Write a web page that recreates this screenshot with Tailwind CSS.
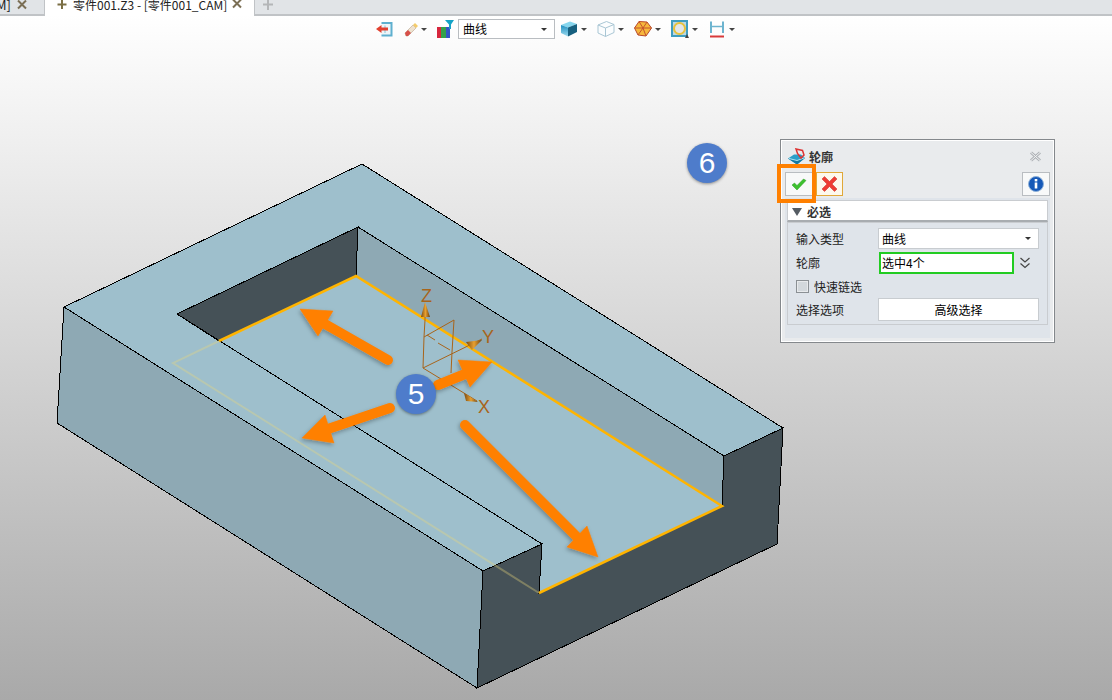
<!DOCTYPE html>
<html><head><meta charset="utf-8"><script src="https://cdn.jsdelivr.net/npm/@tailwindcss/browser@4"></script></head>
<body class="m-0">
<div class="relative w-[1112px] h-[700px] overflow-hidden bg-[linear-gradient(180deg,#ffffff_2%,#a9a9a9_100%)] font-['Noto_Sans_CJK_SC',sans-serif] text-black">

<!-- tab bar -->
<div class="relative z-10 flex items-start h-[16px] bg-[#e1e4e7] border-b-2 border-[#c0c3c6]">
  <div class="w-[45px] h-[15px] flex items-start border-r border-[#c0c3c6] overflow-hidden">
    <span class="ml-[-4px] mt-[-4px] text-[13px] leading-[18px] text-[#222]">M]</span>
    <svg class="ml-[6px]" width="10" height="10" viewBox="0 0 10 10"><path d="M1 0.5L9 8.5M9 0.5L1 8.5" stroke="#7b6f55" stroke-width="2"/></svg>
  </div>
  <div class="w-[209px] h-[16px] bg-white flex items-start overflow-hidden">
    <svg class="ml-[12px] shrink-0" width="10" height="10" viewBox="0 0 10 10"><path d="M5 0V9M0.5 4.5H9.5" stroke="#7b6f45" stroke-width="2"/></svg>
    <span class="ml-[6px] mt-[-4px] text-[12px] leading-[18px] whitespace-nowrap text-[#222] w-[153px]">零件001.Z3 - [零件001_CAM]</span>
    <svg class="ml-[6px] mt-[-1px] shrink-0" width="10" height="10" viewBox="0 0 10 10"><path d="M1 0.5L9 8.5M9 0.5L1 8.5" stroke="#7b6f55" stroke-width="2"/></svg>
  </div>
  <div class="w-px h-[15px] bg-[#c0c3c6]"></div>
  <svg class="ml-[8px] shrink-0" width="10" height="10" viewBox="0 0 10 10"><path d="M5 0V10M0 4.5H10" stroke="#b4b6b8" stroke-width="2"/></svg>
</div>

<!-- toolbar -->
<div class="relative z-10 flex items-center h-[20px] mt-[3px] pl-[376px]">
  <svg class="shrink-0" width="17" height="16" viewBox="0 0 17 16"><path d="M5.5 2H15.5V14.5H5.5" fill="#eef5f8" stroke="#5fb0cf" stroke-width="2"/><path d="M9 4.5V12" stroke="#a9d3e2" stroke-width="1.5"/><path d="M0 8L5.5 4V6.5H12V9.5H5.5V12Z" fill="#e2402f"/></svg>
  <svg class="ml-[11px] shrink-0" width="15" height="15" viewBox="0 0 15 15"><path d="M1 11L9 3L12 6L4 14H2Z" fill="#efe2cf" stroke="#b9a58f" stroke-width=".6"/><path d="M1 11L4 8L7 11L4 14H2Z" fill="#d8504a"/><path d="M9 3L11 1L14 4L12 6Z" fill="#f4cb6a"/></svg>
  <span class="ml-[2px] w-0 h-0 border-x-[3px] border-x-transparent border-t-[3px] border-t-[#444]"></span>
  <svg class="ml-[9px] shrink-0" width="18" height="18" viewBox="0 0 18 18"><rect x="1" y="7" width="4" height="11" fill="#d7263d"/><rect x="5" y="7" width="5" height="11" fill="#35a04a"/><rect x="10" y="7" width="4" height="11" fill="#3554c4"/><path d="M9 0H18L15 4.5V9H13V4.5Z" fill="#15a3c7"/></svg>
  <div class="ml-[4px] w-[97px] h-[20px] bg-white border border-[#b9bdc1] flex items-center pl-[4px] pr-[7px] shrink-0">
    <span class="flex-1 text-[12px] leading-[16px]">曲线</span>
    <span class="w-0 h-0 border-x-[3px] border-x-transparent border-t-[3px] border-t-[#333]"></span>
  </div>
  <svg class="ml-[5px] shrink-0" width="18" height="16" viewBox="0 0 18 16"><defs><linearGradient id="cb" x1="0" y1="0" x2="0" y2="1"><stop offset="0" stop-color="#1e8fc0"/><stop offset="1" stop-color="#9fdcf0"/></linearGradient></defs><path d="M1 4L10 0.5L17 3L8 6.5Z" fill="#86d6ee"/><path d="M1 4L8 6.5V15.5L1 12Z" fill="url(#cb)"/><path d="M8 6.5L17 3V11L8 15.5Z" fill="#17607f"/></svg>
  <span class="ml-[3px] w-0 h-0 border-x-[3px] border-x-transparent border-t-[3px] border-t-[#444]"></span>
  <svg class="ml-[10px] shrink-0" width="18" height="16" viewBox="0 0 18 16"><path d="M1 4L9.5 0.5L17 3.5V11.5L8.5 15.5L1 12Z M1 4L8.5 7L17 3.5 M8.5 7V15.5" fill="#fbfdfe" stroke="#a9c6d4" stroke-width="1"/></svg>
  <span class="ml-[3px] w-0 h-0 border-x-[3px] border-x-transparent border-t-[3px] border-t-[#444]"></span>
  <svg class="ml-[10px] shrink-0" width="18" height="16" viewBox="0 0 18 16"><path d="M5 0.5L13 1L17.5 7L12 15L4 14L0.5 7Z" fill="#f6b73c" stroke="#b8482b" stroke-width="1"/><path d="M5 0.5L9 7L13 1M0.5 7L9 7L17.5 7M9 7L4 14M9 7L12 15" fill="none" stroke="#c4522e" stroke-width="1"/></svg>
  <span class="ml-[3px] w-0 h-0 border-x-[3px] border-x-transparent border-t-[3px] border-t-[#444]"></span>
  <svg class="ml-[10px] shrink-0" width="18" height="18" viewBox="0 0 18 18"><rect x="1" y="1" width="15" height="15" fill="#bcd8e4" stroke="#3f9dc0" stroke-width="2"/><circle cx="8.5" cy="8.5" r="5.5" fill="#e3e6e8" stroke="#e7c23c" stroke-width="2"/><path d="M16 14L18 18H14Z" fill="#444"/></svg>
  <span class="ml-[3px] w-0 h-0 border-x-[3px] border-x-transparent border-t-[3px] border-t-[#444]"></span>
  <svg class="ml-[12px] shrink-0" width="15" height="17" viewBox="0 0 15 17"><path d="M1 0.5V12M13 0.5V12" stroke="#6db4cf" stroke-width="2"/><path d="M2 5.5H12" stroke="#6db4cf" stroke-width="1.5"/><path d="M0 15.5H14" stroke="#d83a3a" stroke-width="2"/></svg>
  <span class="ml-[4px] w-0 h-0 border-x-[3px] border-x-transparent border-t-[3px] border-t-[#444]"></span>
</div>

<!-- 3D model (free canvas) -->
<svg class="absolute left-0 top-0" width="1112" height="700" viewBox="0 0 1112 700">
  <defs>
    <filter id="sh" x="-30%" y="-30%" width="160%" height="160%"><feDropShadow dx="-1" dy="2" stdDeviation="2" flood-color="#000" flood-opacity=".3"/></filter>
    <linearGradient id="cone" x1="0" y1="0" x2="1" y2="0"><stop offset="0" stop-color="#7a4a10"/><stop offset=".5" stop-color="#e8a030"/><stop offset="1" stop-color="#6b3f0c"/></linearGradient>
  </defs>
  <g shape-rendering="crispEdges">
  <polygon points="64,307 483,571 477,688 57,423" fill="#8ea9b4" stroke="#000" stroke-width="1"/>
  <polygon points="362,164 783,428 724,456 358,227 177,314 542,544 483,571 64,307" fill="#9ebfcc" stroke="#000" stroke-width="1"/>
  <polygon points="356,276 722,506 539,593 542,544 219,341" fill="#9ebfcc"/>
  <polygon points="358,227 724,456 722,506 356,276" fill="#8ea9b4"/>
  <path d="M358,227L724,456L722,506" fill="none" stroke="#000" stroke-width="1"/>
  <path d="M358,227L356,276" fill="none" stroke="#000" stroke-width="1"/>
  <polygon points="358,227 356,276 219,341 177,314" fill="#455157" stroke="#000" stroke-width="1"/>
  <polygon points="483,571 542,544 539,593 722,506 724,456 783,428 777,544 477,688" fill="#455157" stroke="#000" stroke-width="1"/>
  <path d="M177,314L542,544" stroke="#000" stroke-width="1" fill="none"/>
  </g>
  <path d="M219,341L173,363L539,593" fill="none" stroke="#e8d77a" stroke-opacity=".35" stroke-width="2"/>
  <path d="M219,341L356,276L722,506L539,593" fill="none" stroke="#ffb400" stroke-width="2.5"/>
  <g fill="none" stroke="#a8641a" stroke-width="1">
    <path d="M425,305V320L424,337L423,368L482,339"/>
    <path d="M423,368L477,401"/>
    <path d="M424,337L454,320L452,352L451,373"/>
    <path d="M427,335L435,340M438,343L450,350"/>
  </g>
  <path d="M425,302L421,317H430Z" fill="url(#cone)"/>
  <path d="M482,340L466,342L472,350Z" fill="url(#cone)"/>
  <path d="M478,402L464,393L466,401Z" fill="url(#cone)"/>
  <text x="421" y="302" font-size="18" fill="#a8641a" font-family="Liberation Sans">Z</text>
  <text x="482" y="343" font-size="18" fill="#a8641a" font-family="Liberation Sans">Y</text>
  <text x="478" y="413" font-size="18" fill="#a8641a" font-family="Liberation Sans">X</text>
  <g filter="url(#sh)" fill="#ff8000" stroke="#ff8000">
    <path d="M388,360L318,320" stroke-width="10" stroke-linecap="round"/>
    <polygon points="300,309 333,311 318,336" stroke-width="0.5"/>
    <path d="M438,385L470,372" stroke-width="10" stroke-linecap="round"/>
    <polygon points="492,362 458,360 470,387" stroke-width="0.5"/>
    <path d="M390,408L325,430" stroke-width="10" stroke-linecap="round"/>
    <polygon points="302,438 325,415 334,443" stroke-width="0.5"/>
    <path d="M465,425L580,540" stroke-width="10" stroke-linecap="round"/>
    <polygon points="598,557 587,526 567,547" stroke-width="0.5"/>
  </g>
</svg>

<!-- numbered badges -->
<div class="absolute left-[396px] top-[374px] w-[40px] h-[40px] rounded-full bg-[#4e7ccb] shadow-[0_1px_3px_rgba(0,0,0,.4)] flex items-center justify-center text-white text-[30px] leading-none font-['Liberation_Sans',sans-serif]">5</div>
<div class="absolute left-[687px] top-[143px] w-[40px] h-[40px] rounded-full bg-[#4e7ccb] shadow-[0_1px_3px_rgba(0,0,0,.4)] flex items-center justify-center text-white text-[30px] leading-none font-['Liberation_Sans',sans-serif]">6</div>

<!-- dialog window -->
<div class="absolute left-[780px] top-[139px] w-[275px] h-[204px] border border-[#84888c] bg-white p-[1px] text-[12px] leading-[16px]">
  <div class="h-full w-full bg-[#e9ebed] flex flex-col">
    <div class="h-[31px] flex items-center pl-[6px] pr-[11px] shrink-0">
      <svg class="shrink-0" width="17" height="17" viewBox="0 0 17 17"><path d="M0 10.5L6 6.5H13L17 10L9 16.5Z" fill="#2c9fc8"/><path d="M0 10.5L9 12.5L17 10L9 16.5Z" fill="#147aa4"/><path d="M1 10.5L9 12.5L16 10" fill="none" stroke="#aee6f5" stroke-width="1"/><path d="M8 1L14.5 2.5L16 7L13 10L9.5 5.5Z" fill="none" stroke="#d33" stroke-width="1.5"/></svg>
      <span class="ml-[4px] flex-1 font-bold text-[#333]">轮廓</span>
      <svg width="13" height="11" viewBox="0 0 13 11"><path d="M2 1.5L11 9.5M11 1.5L2 9.5" stroke="#aeb2b6" stroke-width="3"/><path d="M2 1.5L11 9.5M11 1.5L2 9.5" stroke="#f2f3f4" stroke-width="1"/></svg>
    </div>
    <div class="h-[24px] flex items-center px-[3px] shrink-0">
      <div class="relative w-[28px] h-[24px] bg-[#f8f9f9] border border-[#b9bdc1] flex items-center justify-center">
        <svg width="16" height="13" viewBox="0 0 16 13"><path d="M1 7L6 12L15 2.5L12.5 1L6 7.5L3.5 5Z" fill="#3dc12e" stroke="#2a9a22" stroke-width=".5"/></svg>
        <div class="absolute left-[-9px] top-[-9px] w-[39px] h-[39px] border-[4px] border-[#ff8000]"></div>
      </div>
      <div class="ml-[3px] w-[27px] h-[24px] bg-[#fdf8ec] border border-[#e0a838] flex items-center justify-center">
        <svg width="17" height="16" viewBox="0 0 17 16"><path d="M1 3L3.5 0.5L8.5 5.5L13.5 0.5L16 3L11 8L16 13L13.5 15.5L8.5 10.5L3.5 15.5L1 13L6 8Z" fill="#ee3c34" stroke="#c62a24" stroke-width=".5"/></svg>
      </div>
      <div class="ml-auto w-[28px] h-[24px] bg-[#f8f9f9] border border-[#b9bdc1] flex items-center justify-center">
        <svg width="16" height="16" viewBox="0 0 16 16"><circle cx="8" cy="8" r="7.5" fill="#1659b8" stroke="#8fb2d9" stroke-width="1"/><rect x="6.7" y="3" width="2.6" height="2.4" fill="#fff"/><rect x="6.7" y="6.5" width="2.6" height="6" fill="#fff"/></svg>
      </div>
    </div>
    <div class="mt-[2px] mx-[3px] mb-[3px] flex-1 bg-[#dfe4ea] px-[2px] pt-[2px] flex flex-col">
      <div class="h-[22px] bg-white border border-[#c9ccd0] border-b-2 border-b-[#a8acb0] flex items-center pl-[4px] pt-[2px] shrink-0">
        <span class="w-0 h-0 border-x-[5px] border-x-transparent border-t-[8px] border-t-[#555c63]"></span>
        <span class="ml-[5px] font-bold text-[#333]">必选</span>
      </div>
      <div class="h-[103px] bg-[#dfe4ea] border border-[#c9ccd0] pt-[5px] px-[8px] flex flex-col shrink-0">
        <div class="flex items-center h-[21px]">
          <span class="w-[82px] shrink-0 text-[#222]">输入类型</span>
          <div class="w-[161px] h-[21px] bg-white border border-[#c8ccd0] flex items-center pl-[3px] pr-[7px]">
            <span class="flex-1">曲线</span>
            <span class="w-0 h-0 border-x-[3px] border-x-transparent border-t-[3px] border-t-[#333]"></span>
          </div>
        </div>
        <div class="flex items-center h-[22px] mt-[3px]">
          <span class="w-[83px] shrink-0 text-[#222]">轮廓</span>
          <div class="w-[135px] h-[22px] bg-white border-2 border-[#22cc22] flex items-center pl-[1px]">选中4个</div>
          <svg class="ml-[6px]" width="10" height="12" viewBox="0 0 10 12"><path d="M0.5 1L5 5L9.5 1M0.5 6.5L5 10.5L9.5 6.5" fill="none" stroke="#444" stroke-width="1.2"/></svg>
        </div>
        <div class="flex items-center h-[17px] mt-[4px]">
          <span class="w-[13px] h-[13px] border border-[#8b9094] bg-[#d3d8dc] shadow-[inset_0_0_0_1px_#e8eaec]"></span>
          <span class="ml-[5px] text-[#222]">快速链选</span>
        </div>
        <div class="flex items-center h-[23px] mt-[3px]">
          <span class="w-[82px] shrink-0 text-[#222]">选择选项</span>
          <div class="w-[161px] h-[23px] bg-white border border-[#c8ccd0] flex items-center justify-center">高级选择</div>
        </div>
      </div>
    </div>
  </div>
</div>
</div>
</body></html>
